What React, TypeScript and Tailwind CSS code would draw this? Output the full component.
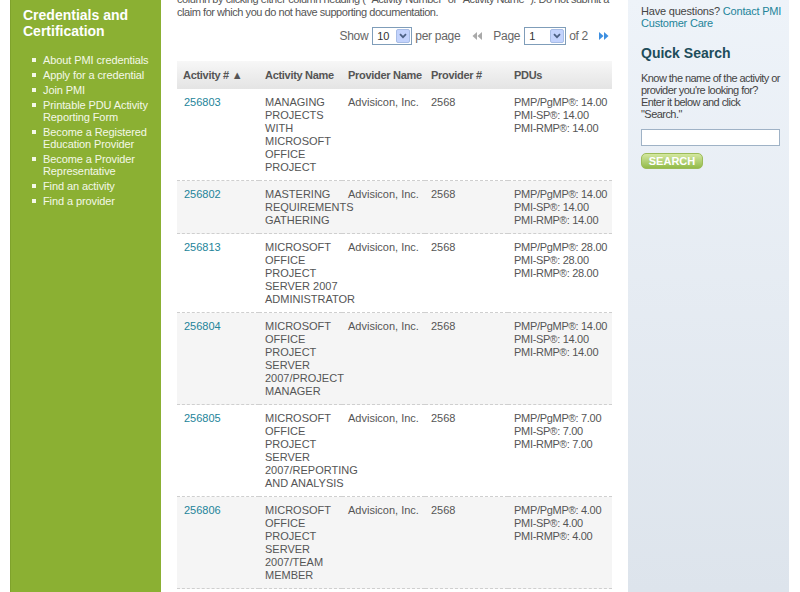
import React from 'react'

type Activity = {
  id: string
  name: string[]
  provider: string
  providerNo: string
  pdus: string
}

const activities: Activity[] = [
  { id: '256803', name: ['MANAGING', 'PROJECTS', 'WITH', 'MICROSOFT', 'OFFICE', 'PROJECT'], provider: 'Advisicon, Inc.', providerNo: '2568', pdus: '14.00' },
  { id: '256802', name: ['MASTERING', 'REQUIREMENTS', 'GATHERING'], provider: 'Advisicon, Inc.', providerNo: '2568', pdus: '14.00' },
  { id: '256813', name: ['MICROSOFT', 'OFFICE', 'PROJECT', 'SERVER 2007', 'ADMINISTRATOR'], provider: 'Advisicon, Inc.', providerNo: '2568', pdus: '28.00' },
  { id: '256804', name: ['MICROSOFT', 'OFFICE', 'PROJECT', 'SERVER', '2007/PROJECT', 'MANAGER'], provider: 'Advisicon, Inc.', providerNo: '2568', pdus: '14.00' },
  { id: '256805', name: ['MICROSOFT', 'OFFICE', 'PROJECT', 'SERVER', '2007/REPORTING', 'AND ANALYSIS'], provider: 'Advisicon, Inc.', providerNo: '2568', pdus: '7.00' },
  { id: '256806', name: ['MICROSOFT', 'OFFICE', 'PROJECT', 'SERVER', '2007/TEAM', 'MEMBER'], provider: 'Advisicon, Inc.', providerNo: '2568', pdus: '4.00' },
]

const sideLinks = [
  ['About PMI credentials'],
  ['Apply for a credential'],
  ['Join PMI'],
  ['Printable PDU Activity', 'Reporting Form'],
  ['Become a Registered', 'Education Provider'],
  ['Become a Provider', 'Representative'],
  ['Find an activity'],
  ['Find a provider'],
]

function FakeSelect({ value, width }: { value: string; width: string }) {
  return (
    <div className={`flex h-[18px] ${width} items-center justify-between border border-[#7f9db9] bg-white pl-[4px] pr-[1px]`}>
      <span className="text-[11px] text-[#333]">{value}</span>
      <span className="flex h-[14px] w-[14px] items-center justify-center rounded-[2px] border border-[#a8bde6] bg-[#c3d3fd]">
        <svg width="8" height="6" viewBox="0 0 8 6">
          <path d="M1 1.2 L4 4.2 L7 1.2" fill="none" stroke="#4d6185" strokeWidth="1.8" />
        </svg>
      </span>
    </div>
  )
}

function DoubleArrow({ dir, color }: { dir: 'left' | 'right'; color: string }) {
  return (
    <svg width="10" height="8" viewBox="0 0 10 8">
      {dir === 'right' ? (
        <>
          <path d="M0 0 L4.5 4 L0 8 Z" fill={color} />
          <path d="M5 0 L9.5 4 L5 8 Z" fill={color} />
        </>
      ) : (
        <>
          <path d="M10 0 L5.5 4 L10 8 Z" fill={color} />
          <path d="M5 0 L0.5 4 L5 8 Z" fill={color} />
        </>
      )}
    </svg>
  )
}

function Reg() {
  return <span className="text-[10px] leading-none">®</span>
}

export default function App() {
  return (
    <div className="flex h-screen overflow-hidden bg-white font-['Liberation_Sans',Arial,sans-serif] text-[11px] text-[#555]">
      {/* left nav */}
      <div className="ml-[10px] w-[151px] shrink-0 border-l border-[#7fa22c] bg-[#8bb033] pl-[12px] pt-[7px]">
        <h2 className="text-[14px] font-bold leading-[16px] text-white">
          Credentials and
          <br />
          Certification
        </h2>
        <ul className="mt-[15px] flex flex-col gap-[3px] tracking-[-0.1px]">
          {sideLinks.map((lines) => (
            <li key={lines[0]} className="flex text-[11px] leading-[12px] text-[#f4f8e8]">
              <span className="mt-[4px] ml-[9px] mr-[7px] h-[4px] w-[4px] shrink-0 bg-[#f4f8e8]" />
              <span>
                {lines.map((l, i) => (
                  <React.Fragment key={l}>
                    {i > 0 && <br />}
                    {l}
                  </React.Fragment>
                ))}
              </span>
            </li>
          ))}
        </ul>
      </div>

      {/* main column */}
      <div className="w-[467px] shrink-0 pl-[16px] pr-[16px]">
        <p className="-mt-[7px] whitespace-nowrap leading-[13px] tracking-[-0.45px] text-[#555]">
          column by clicking either column heading ( "Activity Number" or "Activity Name" ). Do not submit a
          <br />
          claim for which you do not have supporting documentation.
        </p>

        <div className="mt-[8px] flex items-center justify-end pr-[3px] text-[12px] tracking-[-0.3px] text-[#666]">
          <span>Show</span>
          <div className="ml-[4px] mr-[3px]">
            <FakeSelect value="10" width="w-[40px]" />
          </div>
          <span>per page</span>
          <span className="ml-[12px] mr-[11px] flex items-center">
            <DoubleArrow dir="left" color="#a9a9a9" />
          </span>
          <span>Page</span>
          <div className="ml-[4px] mr-[3px]">
            <FakeSelect value="1" width="w-[42px]" />
          </div>
          <span>of 2</span>
          <span className="ml-[11px] flex items-center">
            <DoubleArrow dir="right" color="#3d8fe0" />
          </span>
        </div>

        <table className="mt-[16px] w-[435px] table-fixed border-collapse">
          <colgroup>
            <col className="w-[82px]" />
            <col className="w-[83px]" />
            <col className="w-[83px]" />
            <col className="w-[83px]" />
            <col className="w-[104px]" />
          </colgroup>
          <thead>
            <tr className="h-[28px] bg-gradient-to-b from-[#f7f7f7] to-[#e4e4e4] text-left">
              <th className="whitespace-nowrap pl-[6px] font-bold tracking-[-0.3px] text-[#555]">Activity # ▲</th>
              <th className="whitespace-nowrap pl-[6px] font-bold tracking-[-0.3px] text-[#555]">Activity Name</th>
              <th className="whitespace-nowrap pl-[6px] font-bold tracking-[-0.3px] text-[#555]">Provider Name</th>
              <th className="whitespace-nowrap pl-[6px] font-bold tracking-[-0.3px] text-[#555]">Provider #</th>
              <th className="whitespace-nowrap pl-[6px] font-bold tracking-[-0.3px] text-[#555]">PDUs</th>
            </tr>
          </thead>
          <tbody>
            {activities.map((a, i) => (
              <tr
                key={a.id}
                className={`border-b border-dashed border-[#cfcfcf] align-top leading-[13px] ${i % 2 === 1 ? 'bg-[#f5f5f5]' : 'bg-white'}`}
              >
                <td className="pt-[7px] pb-[6px] pl-[7px] text-[#23849a]">{a.id}</td>
                <td className="pt-[7px] pb-[6px] pl-[6px] whitespace-nowrap text-[#555]">
                  {a.name.map((l, k) => (
                    <div key={k}>{l}</div>
                  ))}
                </td>
                <td className="pt-[7px] pb-[6px] pl-[6px] whitespace-nowrap text-[#555]">{a.provider}</td>
                <td className="pt-[7px] pb-[6px] pl-[6px] text-[#555]">{a.providerNo}</td>
                <td className="pt-[7px] pb-[6px] pl-[6px] whitespace-nowrap tracking-[-0.3px] text-[#555]">
                  <div className="h-[13px]">PMP/PgMP<Reg />: {a.pdus}</div>
                  <div className="h-[13px]">PMI-SP<Reg />: {a.pdus}</div>
                  <div className="h-[13px]">PMI-RMP<Reg />: {a.pdus}</div>
                </td>
              </tr>
            ))}
          </tbody>
        </table>
      </div>

      {/* right panel */}
      <div className="w-[161px] shrink-0 bg-gradient-to-b from-[#eef3f9] to-[#dde4ec] pl-[13px] pr-[4px] pt-[5px] tracking-[-0.2px]">
        <p className="leading-[12px] text-[#444]">
          Have questions? <span className="text-[#23849a]">Contact PMI</span>
          <br />
          <span className="text-[#23849a]">Customer Care</span>
        </p>
        <h3 className="mt-[16px] text-[14px] font-bold leading-[16px] tracking-normal text-[#1d4d5b]">Quick Search</h3>
        <p className="mt-[11px] whitespace-nowrap leading-[12px] tracking-[-0.55px] text-[#444]">
          Know the name of the activity or
          <br />
          provider you're looking for?
          <br />
          Enter it below and click
          <br />
          "Search."
        </p>
        <div className="mt-[9px] h-[17px] w-[139px] border border-[#9fb2c6] bg-white" />
        <button
          type="button"
          className="mt-[7px] flex h-[16px] w-[62px] items-center justify-center rounded-[5px] border border-[#9cbc58] bg-gradient-to-b from-[#d4e8a0] to-[#93bb48] text-[11px] font-bold leading-none tracking-normal text-white"
        >
          SEARCH
        </button>
      </div>
    </div>
  )
}
